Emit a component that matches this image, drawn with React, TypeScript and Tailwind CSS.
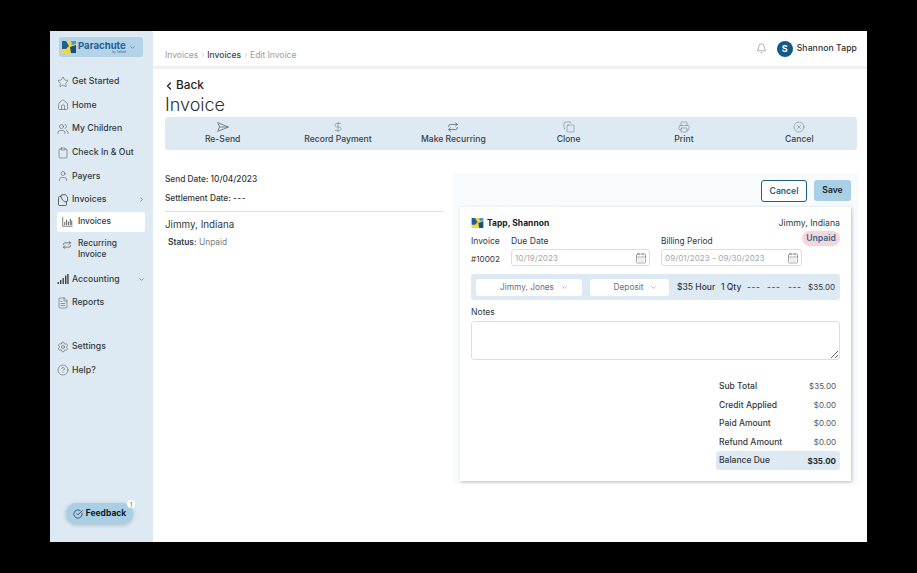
import React from "react";
import { Star, Home, Users, Clipboard, User, FileText, Settings, CircleHelp, ChevronRight, ChevronDown, ChevronLeft, Bell, DollarSign, Copy, Printer, CircleX, CalendarDays, CircleCheckBig } from "lucide-react";

const font = "font-['Inter','Liberation_Sans',sans-serif]";

function Logo({ className }: { className?: string }) {
  return (
    <svg viewBox="0 0 14 12" className={className}>
      <rect width="14" height="12" fill="#f7d537" />
      <path d="M0 0h4l3 5-3 3H0z" fill="#1f5f96" />
      <path d="M9 0h5v3l-4 1z" fill="#4a9ad0" />
      <path d="M8 6l6-2v8H9z" fill="#14527f" />
    </svg>
  );
}

type IconProps = { size?: number; strokeWidth?: number; className?: string };

function Plane({ size = 12, className }: IconProps) {
  return (
    <svg width={size} height={size} viewBox="0 0 12 12" fill="none" stroke="currentColor" strokeWidth="0.8" strokeLinejoin="round" className={className}>
      <path d="M0.6 1.6L11.4 6L0.6 10.4L2.6 6Z" />
      <path d="M2.6 6H11.4" />
    </svg>
  );
}

function Swap({ size = 12, className }: IconProps) {
  return (
    <svg width={size} height={size} viewBox="0 0 14 14" fill="none" stroke="currentColor" strokeWidth="1" strokeLinecap="round" strokeLinejoin="round" className={className}>
      <path d="M2 6.5V6A2 2 0 0 1 4 4H12M10 2l2 2-2 2" />
      <path d="M12 7.5V8A2 2 0 0 1 10 10H2M4 8l-2 2 2 2" />
    </svg>
  );
}

function Tagged({ size = 12, className }: IconProps) {
  return (
    <svg width={size} height={size} viewBox="0 0 12 12" fill="none" stroke="currentColor" strokeWidth="0.8" strokeLinejoin="round" className={className}>
      <rect x="1.5" y="2.5" width="8" height="9" rx="1" />
      <path d="M4 1L8 0.6L10.6 3V7L8 8L5.5 6L4 3Z" fill="#deeaf3" />
    </svg>
  );
}

function Bars({ size = 12, className }: IconProps) {
  return (
    <svg width={size} height={size} viewBox="0 0 12 12" fill="currentColor" className={className}>
      <rect x="0.5" y="9" width="1.4" height="2" />
      <rect x="3" y="7" width="1.4" height="4" />
      <rect x="5.5" y="5" width="1.4" height="6" />
      <rect x="8" y="2.5" width="1.4" height="8.5" />
      <rect x="10.2" y="1" width="1.4" height="10" />
    </svg>
  );
}

function AxisBars({ size = 12, className }: IconProps) {
  return (
    <svg width={size} height={size} viewBox="0 0 12 12" fill="none" stroke="currentColor" strokeWidth="0.8" className={className}>
      <path d="M0.8 1V11.2H11.5" />
      <path d="M3 10V6.5M5 10V4M7 10V6M9 10V3M10.6 10V5" strokeWidth="1" />
    </svg>
  );
}

function NavItem({ icon: Icon, label, chevron }: { icon: any; label: string; chevron?: "r" | "d" }) {
  return (
    <div className="flex h-[23.6px] items-center pl-[7px] pr-2 text-[#33383d]">
      <Icon size={12} strokeWidth={1} className="shrink-0 text-[#3d4248]" />
      <span className="ml-[3px] text-[8.7px] font-medium whitespace-nowrap">{label}</span>
      {chevron === "r" && <ChevronRight size={7} className="ml-auto text-[#555]" />}
      {chevron === "d" && <ChevronDown size={7} className="ml-auto text-[#555]" />}
    </div>
  );
}

function Tool({ icon: Icon, label }: { icon: any; label: string }) {
  return (
    <div className="flex flex-1 flex-col items-center text-[#3a3f44]">
      <Icon size={12} strokeWidth={1} className="text-[#666c72]" />
      <span className="text-[8.6px] font-medium leading-[13px] whitespace-nowrap">{label}</span>
    </div>
  );
}

function DateField({ value, className }: { value: string; className: string }) {
  return (
    <div className={`flex h-[17px] items-center justify-between rounded-[3px] border border-[#dcdfe2] pl-[3px] pr-[2px] ${className}`}>
      <span className="text-[8px] tracking-[0.1px] text-[#a3a7ab] whitespace-nowrap">{value}</span>
      <CalendarDays size={12} strokeWidth={1} className="text-[#555]" />
    </div>
  );
}

function Sel({ label, className }: { label: string; className: string }) {
  return (
    <div className={`flex h-[17px] shrink-0 items-center justify-center gap-[7px] rounded-[3px] bg-white text-[8.3px] text-[#6b7075] ${className}`}>
      <span className="whitespace-nowrap">{label}</span>
      <ChevronDown size={7} className="text-[#888]" />
    </div>
  );
}

function Total({ label, value, strong }: { label: string; value: string; strong?: boolean }) {
  return (
    <div className={`flex h-[18.6px] items-center justify-between pl-[3px] pr-[4px] ${strong ? "rounded-[3px] bg-[#deeaf3]" : ""}`}>
      <span className="text-[8.5px] font-medium text-[#33383d]">{label}</span>
      <span className={strong ? "text-[8px] font-bold text-[#23272b]" : "text-[8px] text-[#55595e]"}>{value}</span>
    </div>
  );
}

export default function App() {
  return (
    <div className={`flex h-[573px] w-[917px] bg-black px-[50px] py-[31px] ${font}`}>
      <div className="relative flex flex-1 overflow-hidden bg-white">
        <aside className="flex w-[103px] shrink-0 flex-col bg-[#deeaf3]">
          <div className="mx-[9px] mt-[6px] flex h-[20px] w-[84px] items-center rounded-[3px] bg-[#b4d3e7] pl-[3px]">
            <Logo className="h-[12px] w-[14px]" />
            <div className="ml-[2px] flex flex-col items-end">
              <span className="text-[9.6px] font-bold leading-[10px] text-[#1f5f96]">Parachute</span>
              <span className="text-[3px] leading-[3px] text-[#1f5f96]">by Tallied</span>
            </div>
            <ChevronDown size={7} className="ml-[3px] text-[#1f5f96]" />
          </div>
          <nav className="mt-[13px] flex flex-col">
            <NavItem icon={Star} label="Get Started" />
            <NavItem icon={Home} label="Home" />
            <NavItem icon={Users} label="My Children" />
            <NavItem icon={Clipboard} label="Check In & Out" />
            <NavItem icon={User} label="Payers" />
            <NavItem icon={Tagged} label="Invoices" chevron="r" />
            <div className="ml-[7px] mr-[8px] flex h-[20px] items-center rounded-[2px] bg-white pl-[5px] text-[#33383d]">
              <AxisBars size={11} className="text-[#555]" />
              <span className="ml-[5px] text-[8.3px] font-medium">Invoices</span>
            </div>
            <div className="mx-[7px] mt-[6px] flex items-start pl-[5px] text-[#33383d]">
              <Swap size={10} className="mt-[2px] text-[#555]" />
              <span className="ml-[6px] text-[8.3px] font-medium leading-[11.5px]">Recurring<br />Invoice</span>
            </div>
            <div className="mt-[7px]">
              <NavItem icon={Bars} label="Accounting" chevron="d" />
              <NavItem icon={FileText} label="Reports" />
            </div>
            <div className="mt-[20px]">
              <NavItem icon={Settings} label="Settings" />
              <NavItem icon={CircleHelp} label="Help?" />
            </div>
          </nav>
        </aside>

        <div className="absolute bottom-[18px] left-[16px] flex h-[21px] w-[67px] items-center justify-center gap-[3px] rounded-full bg-[#a9cfe6] shadow-[0_1px_4px_rgba(80,110,130,0.4)]">
          <CircleCheckBig size={10} strokeWidth={1.5} className="text-[#14181c]" />
          <span className="text-[8.5px] font-bold text-[#14181c]">Feedback</span>
          <span className="absolute right-[-2px] top-[-3px] flex h-[8px] w-[8px] items-center justify-center rounded-full bg-white text-[6px] text-[#666]">1</span>
        </div>

        <main className="flex min-w-0 flex-1 flex-col">
          <header className="flex h-[38px] shrink-0 items-center border-b-[3px] border-[#eef0f1] pl-[12px] pr-[10px]">
            <div className="mt-[13px] flex items-center text-[8.5px]">
              <span className="text-[#9a9ea2]">Invoices</span>
              <ChevronRight size={6} className="mx-[1.5px] text-[#9a9ea2]" />
              <span className="font-medium text-[#3d4248]">Invoices</span>
              <ChevronRight size={6} className="mx-[1.5px] text-[#9a9ea2]" />
              <span className="text-[#9a9ea2]">Edit Invoice</span>
            </div>
            <Bell size={11} strokeWidth={1} className="ml-auto text-[#555]" />
            <div className="ml-[10px] flex h-[16px] w-[16px] items-center justify-center rounded-full bg-[#12598c] text-[9px] font-bold text-white">S</div>
            <span className="ml-[4px] text-[8.6px] font-medium tracking-[0.1px] text-[#2d3135]">Shannon Tapp</span>
          </header>

          <div className="flex flex-1 flex-col pl-[12px] pr-[10px]">
            <div className="mt-[9px] flex h-[15px] items-center text-[#1f2327]">
              <ChevronLeft size={12} strokeWidth={2.5} className="ml-[-2px]" />
              <span className="ml-[1px] text-[11.8px] font-medium">Back</span>
            </div>
            <h1 className="text-[18px] leading-[23px] font-light text-[#2d3135]">Invoice</h1>
            <div className="mt-[1px] flex h-[33px] items-center rounded-[3px] bg-[#deeaf3]">
              <Tool icon={Plane} label="Re-Send" />
              <Tool icon={DollarSign} label="Record Payment" />
              <Tool icon={Swap} label="Make Recurring" />
              <Tool icon={Copy} label="Clone" />
              <Tool icon={Printer} label="Print" />
              <Tool icon={CircleX} label="Cancel" />
            </div>

            <div className="mt-[23px] flex items-start gap-[9px]">
              <section className="w-[279px] shrink-0">
                <p className="text-[8.3px] leading-[12px] font-medium text-[#33383d]">Send Date: 10/04/2023</p>
                <p className="mt-[7px] text-[8.3px] leading-[12px] font-medium text-[#33383d]">Settlement Date: <span className="tracking-[0.6px]">---</span></p>
                <div className="mt-[7px] border-t border-[#dfe1e3]" />
                <p className="mt-[6px] text-[9.8px] leading-[14px] text-[#33383d]">Jimmy, Indiana</p>
                <p className="mt-[4px] ml-[3px] text-[8.4px] leading-[12px] text-[#7a7e83]"><span className="font-semibold text-[#33383d]">Status:</span> Unpaid</p>
              </section>

              <section className="flex h-[311px] flex-1 flex-col rounded-[3px] bg-[#f7fbfc] px-[7px] pt-[7px]">
                <div className="flex justify-end gap-[7px]">
                  <button className="h-[22px] w-[46px] rounded-[3px] border border-[#205c85] bg-white text-[8.6px] font-semibold text-[#205c85]">Cancel</button>
                  <button className="h-[21px] w-[37px] rounded-[3px] bg-[#a9cfe6] text-[8.6px] font-semibold text-[#1b2024]">Save</button>
                </div>
                <div className="mt-[5px] h-[274px] bg-white px-[11px] pt-[10px] shadow-[1px_1px_3px_rgba(120,140,150,0.5)]">
                  <div className="flex items-start">
                    <div className="flex-1">
                      <div className="flex h-[12px] items-center gap-[3px]">
                        <Logo className="h-[10px] w-[13px]" />
                        <span className="text-[8.5px] font-bold text-[#1c2024]">Tapp, Shannon</span>
                      </div>
                      <div className="mt-[6px] flex">
                        <div className="w-[40px] text-[#33383d]">
                          <div className="h-[14px] text-[8.5px] leading-[13px]">Invoice</div>
                          <div className="mt-[4px] text-[8.2px] leading-[13px]">#10002</div>
                        </div>
                        <div className="w-[150px]">
                          <div className="h-[14px] text-[8.6px] leading-[13px] text-[#33383d]">Due Date</div>
                          <DateField value="10/19/2023" className="w-[139px]" />
                        </div>
                        <div>
                          <div className="h-[14px] text-[8.4px] leading-[13px] text-[#33383d]">Billing Period</div>
                          <DateField value="09/01/2023 - 09/30/2023" className="w-[141px]" />
                        </div>
                      </div>
                    </div>
                    <div className="flex w-[38px] flex-col items-end">
                      <span className="h-[12px] text-[8.7px] leading-[12px] whitespace-nowrap text-[#33383d]">Jimmy, Indiana</span>
                      <span className="mt-[2px] flex h-[15px] w-[38px] items-center justify-center rounded-full bg-[#f6d6d9] text-[8.6px] font-semibold text-[#2f6a96]">Unpaid</span>
                    </div>
                  </div>

                  <div className="mt-[8px] flex h-[26px] items-center rounded-[3px] bg-[#deeaf3] px-[5px] text-[8.5px] whitespace-nowrap text-[#33383d]">
                    <Sel label="Jimmy, Jones" className="w-[106px] pl-[10px]" />
                    <Sel label="Deposit" className="ml-[8px] w-[79px] pl-[12px]" />
                    <span className="ml-[8px] w-[44px] shrink-0 font-medium">$35 Hour</span>
                    <span className="w-[26px] shrink-0 font-medium">1 Qty</span>
                    <span className="w-[20px] shrink-0 tracking-[0.6px]">---</span>
                    <span className="w-[21px] shrink-0 tracking-[0.6px]">---</span>
                    <span className="w-[20px] shrink-0 tracking-[0.6px]">---</span>
                    <span className="ml-auto text-[8px]">$35.00</span>
                  </div>

                  <div className="mt-[6px] h-[13px] text-[8.6px] leading-[13px] text-[#33383d]">Notes</div>
                  <textarea className="mt-[2px] block h-[39px] w-full rounded-[3px] border border-[#dcdfe2] bg-white" />

                  <div className="mt-[17px] ml-auto w-[124px]">
                    <Total label="Sub Total" value="$35.00" />
                    <Total label="Credit Applied" value="$0.00" />
                    <Total label="Paid Amount" value="$0.00" />
                    <Total label="Refund Amount" value="$0.00" />
                    <Total label="Balance Due" value="$35.00" strong />
                  </div>
                </div>
              </section>
            </div>
          </div>
        </main>
      </div>
    </div>
  );
}
